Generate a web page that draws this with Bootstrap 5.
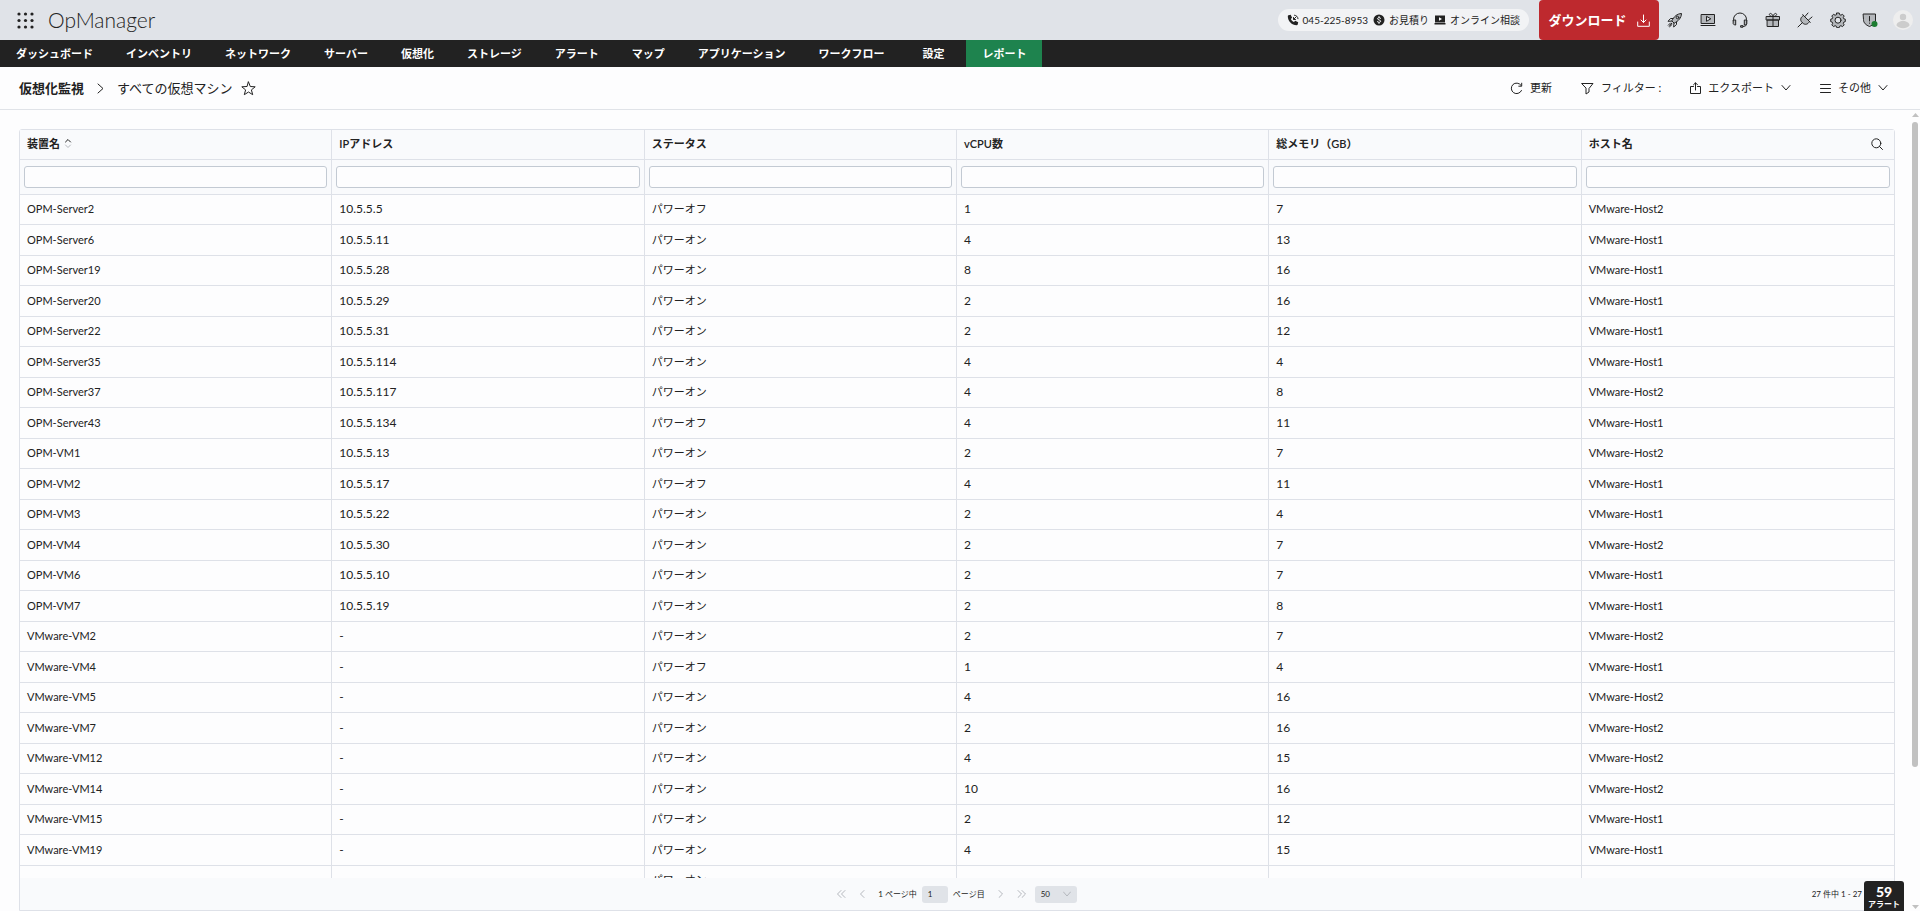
<!DOCTYPE html>
<html lang="ja">
<head>
<meta charset="utf-8">
<meta name="viewport" content="width=device-width, initial-scale=1">
<title>OpManager - すべての仮想マシン</title>
<link rel="stylesheet" href="https://cdn.jsdelivr.net/npm/bootstrap@5.3.0/dist/css/bootstrap.min.css">
<style>
  body { font-family: Lato, "Noto Sans CJK JP", sans-serif; font-size: 12px; line-height: 18px; color: #222; background: #fdfdfe; }
  button, input, select { font-family: inherit; color: inherit; }
  svg { display: block; flex: none; fill: none; stroke: currentColor; stroke-width: 1; stroke-linecap: round; stroke-linejoin: round; }
  a { color: inherit; text-decoration: none; }
  .plain { background: none; border: 0; padding: 0; }
  .top-bar { height: 40px; background: #e0e3e8; padding-left: 17px; padding-right: 7px; }
  .brand { font-size: 21px; font-weight: 300; line-height: 40px; margin-left: 14px; }
  .contact { height: 22px; border-radius: 11px; background: #f2f3f5; font-size: 10px; gap: 5px; padding: 0 9px; margin-right: 10px; }
  .contact a { gap: 4px; }
  .download { background: #be292e; color: #fff; font-size: 13px; font-weight: 700; border-radius: 4px; width: 120px; height: 40px; gap: 10px; margin-right: 6px; }
  .tools { width: 248px; }
  .tools button { width: 20px; display: flex; justify-content: center; }
  .main-nav { height: 27px; background: #222; color: #fff; font-size: 11px; font-weight: 600; gap: 1px; }
  .main-nav a { line-height: 27px; padding: 0 16px; }
  .main-nav a.wide { padding: 0 21px; }
  .main-nav a.active { background: #1e834e; }
  .page-head { height: 43px; border-bottom: 1px solid #e0e3e8; padding: 0 32px 0 19px; font-size: 13px; }
  .crumbs { gap: 13px; }
  .crumbs a { font-weight: 700; }
  .actions { gap: 29px; font-size: 11px; }
  .actions button { gap: 7px; }
  .body-area { min-height: 0; }
  .scroll-area { min-height: 0; min-width: 0; padding: 19px 15px 0 19px; }
  .grid-box { border: 1px solid #dee1e8; border-radius: 3px 3px 0 0; min-width: 0; }
  .rows { min-height: 0; overflow: hidden; }
  .grid-table { table-layout: fixed; width: 100%; border-collapse: separate; border-spacing: 0; }
  .grid-table th, .grid-table td { border: 0 solid #dee1e8; border-width: 0 1px 1px 0; padding: 0 7px; line-height: 18px; }
  .grid-table th:last-child, .grid-table td:last-child { border-right: 0; }
  .grid-table thead { background: #f9fafc; }
  .grid-table .titles th { height: 30px; font-size: 11px; font-weight: 600; padding-bottom: 2px; }
  .grid-table .filters td { height: 35px; padding: 0 4px; }
  .grid-table .filters input { display: block; width: 100%; height: 22px; border: 1px solid #c3cad3; border-radius: 3px; background: #fdfdfe; font-size: 11px; }
  .grid-table tbody td { height: 31px; font-size: 11px; padding-bottom: 1px; }
  .grid-table tbody td:nth-child(2), .grid-table tbody td:nth-child(4), .grid-table tbody td:nth-child(5) { font-size: 12px; }
  .grid-table tbody tr:nth-child(odd) td { height: 30px; }
  .pager { height: 32px; background: #f9fafc; font-size: 8px; line-height: 12px; }
  .pager .icon-btn { color: #b4b7bd; }
  .pager input, .pager select { height: 17px; border: 0; border-radius: 3px; background: #e0e3e8; font-size: 8px; padding: 0 6px; }
  .pager input { width: 26px; }
  .pager select { width: 42px; appearance: none; }
  .pager-mid { gap: 5px; }
  .size-pick svg { position: absolute; right: 6px; top: 5px; color: #b4b7bd; pointer-events: none; }
  .total { position: absolute; right: 32px; }
  .alert-tab { position: fixed; right: 16px; bottom: 0; width: 40px; height: 30px; background: #222; color: #fff; border-radius: 3px 3px 0 0; font-weight: 700; font-size: 8px; line-height: 10px; border: 0; padding: 0; }
  .alert-tab strong { font-size: 14px; line-height: 15px; padding-top: 1px; }
  .side-scroll { width: 10px; padding: 3px 0 2px; }
  .side-scroll i { width: 6px; flex: 0 0 81%; border-radius: 3px; background: #c1c1c1; margin-top: 5px; }
  .side-scroll svg { fill: #c1c1c1; stroke: none; }
</style>
</head>
<body>
<div class="d-flex flex-column vh-100 overflow-hidden">
  <header class="top-bar d-flex align-items-center flex-shrink-0">
    <button class="plain" aria-label="メニュー"><svg width="17" height="17" viewBox="0 0 17 17" style="fill:#222;stroke:none"><circle cx="2" cy="2" r="1.6"/><circle cx="8.500" cy="2" r="1.6"/><circle cx="15" cy="2" r="1.6"/><circle cx="2" cy="8.500" r="1.6"/><circle cx="8.500" cy="8.500" r="1.6"/><circle cx="15" cy="8.500" r="1.6"/><circle cx="2" cy="15" r="1.6"/><circle cx="8.500" cy="15" r="1.6"/><circle cx="15" cy="15" r="1.6"/></svg></button>
    <a href="#" class="brand me-auto">OpManager</a>
    <div class="contact d-flex align-items-center">
      <a href="#" class="d-flex align-items-center"><svg width="12" height="12" viewBox="0 0 12 12"><path fill="#222" stroke="none" d="M1.500 1.300 3.700.800l1.400 3-1.300 1.100c.6 1.400 1.700 2.500 3.200 3.200L8.200 6.800l3 1.400-.5 2.300c-.1.500-.5.800-1 .8C4.800 11.300.8 7.200.8 2.300c0-.5.3-.9.700-1z"/><path d="M6.500 3.500v2h2M6.700 5.300 9 3M7.500 1.200c2 .3 3.200 1.500 3.500 3.500"/></svg>045-225-8953</a>
      <a href="#" class="d-flex align-items-center"><svg width="12" height="12" viewBox="0 0 12 12"><circle cx="6" cy="6" r="5.500" fill="#222" stroke="none"/><path stroke="#f2f3f5" d="M7.700 4.300C7 3.400 4.500 3.400 4.500 4.700c0 1.500 3.200 1 3.200 2.500C7.700 8.600 5 8.600 4.300 7.700M6 2.500v1M6 8.500v1"/></svg>お見積り</a>
      <a href="#" class="d-flex align-items-center"><svg width="12" height="12" viewBox="0 0 12 12"><path fill="#222" stroke="none" d="M1 1.500h10v7H1zM.5 9h11v1.500H.5z"/><path fill="#fff" stroke="none" d="M5 3.200v3.600L8 5z"/></svg>オンライン相談</a>
    </div>
    <button class="download plain d-flex align-items-center justify-content-center">ダウンロード<svg width="13" height="13" viewBox="0 0 13 13"><path d="M6.500 1v7.500M4 6l2.500 2.500L9 6M.7 8v4.300h11.600V8"/></svg></button>
    <div class="tools d-flex align-items-center justify-content-between">
      <button class="plain" aria-label="はじめに"><svg width="16" height="16" viewBox="0 0 16 16"><path fill="#b4b7bb" d="M5 8.500C7 4.500 10 1.800 14.500 1.500 14.300 6 11.500 9 7.500 11z"/><path d="M5.700 6.500H3.500L1 9.300l3.700-.2M9.500 10.300v2.200L6.700 15l.2-3.700M3.500 11 1.300 13.200M5 12.500 2.700 14.700M2.300 14.200l2.500-3"/><circle cx="10.500" cy="5.500" r="1.300"/></svg></button>
      <button class="plain" aria-label="動画"><svg width="16" height="16" viewBox="0 0 16 16"><path fill="#b4b7bb" d="M1.500 2.500h13v9h-13z"/><path d="M1 13.500h14"/><path fill="#e0e3e8" d="M6.500 4.700v4.600l4-2.300z"/></svg></button>
      <button class="plain" aria-label="サポート"><svg width="16" height="16" viewBox="0 0 16 16"><path d="M1.500 9V7.500a6.500 6.500 0 0 1 13 0V12c0 1.500-1 2.500-3.500 2.500"/><path fill="#b4b7bb" d="M1.500 8h2.200v5H2.500l-1-1zM14.500 8h-2.200v5h1.200l1-1zM9 13.700h2v1.500H9z"/></svg></button>
      <button class="plain" aria-label="ギフト"><svg width="16" height="16" viewBox="0 0 16 16"><path fill="#b4b7bb" d="M1.500 4.500h13v3.500h-13zM2.500 8h11v6.500h-11z"/><path d="M8 4.500v10M8 4.500C5 4.500 4 3 4.500 2S7 1 8 4.500C9 1 11 1 11.500 2S11 4.500 8 4.500z"/></svg></button>
      <button class="plain" aria-label="プラグイン"><svg width="16" height="16" viewBox="0 0 16 16"><path fill="#b4b7bb" d="M6.500 3.500 12.500 9.500C11 12.300 8 13.500 5.300 10.700 2.500 8 3.700 5 6.500 3.500z"/><path d="m5.700 2.700 7.600 7.600M8 4.500 11 1M11.500 8 15 5M5.300 10.700 1 15"/></svg></button>
      <button class="plain" aria-label="設定"><svg width="16" height="16" viewBox="0 0 16 16"><path fill="#b4b7bb" d="m6.800 1h2.400l.5 1.700 1.200.5 1.600-.9 1.700 1.700-.9 1.600.5 1.200 1.500.4v2.400l-1.500.5-.5 1.200.9 1.600-1.700 1.700-1.600-.9-1.200.5-.5 1.500H6.800l-.5-1.500-1.200-.5-1.600.9-1.700-1.700.9-1.600-.5-1.200L.7 9.600V7.200l1.500-.4.5-1.200-.9-1.600 1.700-1.700 1.600.9 1.200-.5z"/><circle cx="8" cy="8.200" r="3" fill="#e0e3e8"/></svg></button>
      <button class="plain" aria-label="セキュリティ"><svg width="16" height="16" viewBox="0 0 16 16"><path fill="#b4b7bb" d="M1.500 2h12v6c0 3-2.500 5-6 6.500C4 13 1.500 11 1.500 8z"/><path d="M7.500 4.500V9M7.500 11v.3"/><circle cx="12.500" cy="12" r="3" fill="#1c7c31" stroke="none"/></svg></button>
      <button class="plain" aria-label="アカウント"><svg width="20" height="20" viewBox="0 0 20 20" style="stroke:none"><circle cx="10" cy="10" r="10" fill="#eee"/><circle cx="10" cy="7" r="3.200" fill="#ccc"/><path fill="#ccc" d="M3.500 15.500c0-6 13-6 13 0-3 3.700-10 3.700-13 0z"/></svg></button>
    </div>
  </header>
  <nav class="main-nav d-flex flex-shrink-0">
    <a href="#">ダッシュボード</a><a href="#">インベントリ</a><a href="#">ネットワーク</a><a href="#">サーバー</a><a href="#">仮想化</a><a href="#">ストレージ</a><a href="#">アラート</a><a href="#">マップ</a><a href="#">アプリケーション</a><a href="#">ワークフロー</a><a href="#" class="wide">設定</a><a href="#" class="active" aria-current="page">レポート</a>
  </nav>
  <div class="page-head d-flex align-items-center justify-content-between flex-shrink-0">
    <div class="crumbs d-flex align-items-center">
      <a href="#">仮想化監視</a>
      <svg width="7" height="11" viewBox="0 0 7 11"><path d="m1 1 5 4.500L1 10"/></svg>
      <span class="d-flex align-items-center gap-2">すべての仮想マシン<button class="plain" aria-label="お気に入り"><svg width="15" height="15" viewBox="0 0 15 15"><path d="m7.500 1 1.800 4.500 4.900.3-3.800 3.100 1.300 4.800-4.200-2.700-4.200 2.700 1.300-4.800L.8 5.800l4.900-.3z"/></svg></button></span>
    </div>
    <div class="actions d-flex align-items-center">
      <button class="plain d-flex align-items-center"><svg width="13" height="13" viewBox="0 0 13 13"><path d="M11.500 8.500A5.300 5.300 0 1 1 11 3.300M11.700 1.200v3H8.800"/></svg>更新</button>
      <button class="plain d-flex align-items-center"><svg width="13" height="13" viewBox="0 0 13 13"><path d="M1 1.500h11L8 6.500V10l-3 2V6.500z"/></svg>フィルター :</button>
      <button class="plain d-flex align-items-center"><svg width="11" height="12" viewBox="0 0 11 12"><path d="M3.500 4.500h-3v7h10v-7h-3M5.500 8V1M3.500 2.800 5.500.800l2 2"/></svg>エクスポート<svg width="10" height="6" viewBox="0 0 10 6"><path d="m1 .5 4 4.500L9 .5"/></svg></button>
      <button class="plain d-flex align-items-center"><svg width="11" height="11" viewBox="0 0 11 11"><path d="M.5 1.500h10M.5 5.500h10M.5 9.500h10"/></svg>その他<svg width="10" height="6" viewBox="0 0 10 6"><path d="m1 .5 4 4.500L9 .5"/></svg></button>
    </div>
  </div>
  <main class="body-area d-flex flex-grow-1">
    <div class="scroll-area d-flex flex-grow-1">
      <div class="grid-box d-flex flex-column flex-grow-1">
        <div class="rows flex-grow-1">
          <table class="grid-table">
            <thead>
              <tr class="titles">
                <th><span class="d-flex align-items-center gap-1">装置名<svg width="8" height="9" viewBox="0 0 8 9"><path d="m1.500 3 2.500-2.500L6.500 3"/><path stroke="#b4b7bd" d="M1.500 6 4 8.500 6.500 6"/></svg></span></th>
                <th>IPアドレス</th><th>ステータス</th><th>vCPU数</th><th>総メモリ（GB）</th>
                <th><span class="d-flex align-items-center justify-content-between">ホスト名<button class="plain me-1" aria-label="検索"><svg width="12" height="12" viewBox="0 0 12 12"><circle cx="5.300" cy="5.300" r="4.500"/><path d="m8.500 8.500 3 3"/></svg></button></span></th>
              </tr>
              <tr class="filters"><td><input aria-label="装置名"></td><td><input aria-label="IPアドレス"></td><td><input aria-label="ステータス"></td><td><input aria-label="vCPU数"></td><td><input aria-label="総メモリ"></td><td><input aria-label="ホスト名"></td></tr>
            </thead>
            <tbody id="vms"></tbody>
          </table>
        </div>
        <div class="pager position-relative d-flex align-items-center justify-content-center flex-shrink-0">
          <div class="pager-mid d-flex align-items-center">
            <button class="plain icon-btn me-2" aria-label="最初"><svg width="9" height="8" viewBox="0 0 9 8"><path d="M4 .5.500 4 4 7.500M8 .5 4.500 4 8 7.500"/></svg></button>
            <button class="plain icon-btn me-2" aria-label="前へ"><svg width="6" height="8" viewBox="0 0 6 8"><path d="M5 .5 1.500 4 5 7.500"/></svg></button>
            <label for="pg">1 ページ中</label><input id="pg" value="1"><span>ページ目</span>
            <button class="plain icon-btn ms-2" aria-label="次へ"><svg width="6" height="8" viewBox="0 0 6 8"><path d="M1 .5 4.500 4 1 7.500"/></svg></button>
            <button class="plain icon-btn ms-2" aria-label="最後"><svg width="9" height="8" viewBox="0 0 9 8"><path d="M1 .5 4.500 4 1 7.500M5 .5 8.500 4 5 7.500"/></svg></button>
            <div class="size-pick position-relative d-flex ms-1"><select aria-label="表示件数"><option>50</option></select><svg width="8" height="6" viewBox="0 0 8 6"><path d="M.5 1 4 5l3.500-4"/></svg></div>
          </div>
          <span class="total">27 件中 1 - 27</span>
        </div>
      </div>
    </div>
    <div class="side-scroll d-flex flex-column align-items-center flex-shrink-0" aria-hidden="true">
      <svg width="7" height="4" viewBox="0 0 7 4"><path d="M3.500 0 7 4H0z"/></svg><i></i>
      <svg class="mt-auto" width="7" height="4" viewBox="0 0 7 4"><path d="M0 0h7L3.500 4z"/></svg>
    </div>
  </main>
</div>
<button class="alert-tab"><strong class="d-block">59</strong>アラート</button>
<script>
  const on = 'パワーオン', off = 'パワーオフ';
  const vms = [
    ['OPM-Server2','10.5.5.5',off,1,7,2],['OPM-Server6','10.5.5.11',on,4,13,1],['OPM-Server19','10.5.5.28',on,8,16,1],
    ['OPM-Server20','10.5.5.29',on,2,16,1],['OPM-Server22','10.5.5.31',on,2,12,1],['OPM-Server35','10.5.5.114',on,4,4,1],
    ['OPM-Server37','10.5.5.117',on,4,8,2],['OPM-Server43','10.5.5.134',off,4,11,1],['OPM-VM1','10.5.5.13',on,2,7,2],
    ['OPM-VM2','10.5.5.17',off,4,11,1],['OPM-VM3','10.5.5.22',on,2,4,1],['OPM-VM4','10.5.5.30',on,2,7,2],
    ['OPM-VM6','10.5.5.10',on,2,7,1],['OPM-VM7','10.5.5.19',on,2,8,1],['VMware-VM2','-',on,2,7,2],
    ['VMware-VM4','-',off,1,4,1],['VMware-VM5','-',on,4,16,2],['VMware-VM7','-',on,2,16,2],['VMware-VM12','-',on,4,15,2],
    ['VMware-VM14','-',on,10,16,2],['VMware-VM15','-',on,2,12,1],['VMware-VM19','-',on,4,15,1]
  ];
  const body = document.getElementById('vms');
  for (const vm of vms) {
    const row = body.insertRow();
    vm.forEach((v, i) => { row.insertCell().textContent = i === 5 ? 'VMware-Host' + v : v; });
  }
  const last = body.insertRow();
  for (let i = 0; i < 6; i++) last.insertCell().textContent = i === 2 ? on : '';
</script>
<script src="https://cdn.jsdelivr.net/npm/bootstrap@5.3.0/dist/js/bootstrap.bundle.min.js"></script>
</body>
</html>
